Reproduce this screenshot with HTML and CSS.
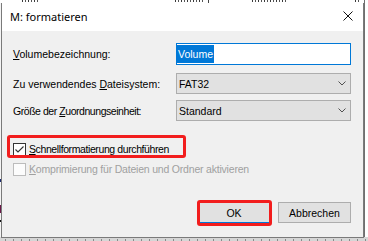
FILE: index.html
```html
<!DOCTYPE html>
<html lang="de">
<head>
<meta charset="utf-8">
<title>M: formatieren</title>
<link rel="stylesheet" href="styles.css">
</head>
<body>
<div class="desktop">
  <div class="behind-top">
    <span class="frag f1"></span>
    <span class="frag f2"></span>
    <span class="frag f2b"></span>
    <span class="frag f3"></span>
    <span class="frag f4"></span>
  </div>
  <div class="behind-right"></div>
  <div class="behind-bottom"></div>
  <div class="left-mark m1"></div>
  <div class="left-mark m2"></div>
  <div class="left-mark m3"></div>

  <div class="dialog">
    <div class="titlebar">
      <span class="title">M: formatieren</span>
      <svg class="close" width="10" height="10" viewBox="0 0 10 10" aria-hidden="true">
        <path d="M0.5 0.5 L9.5 9.5 M9.5 0.5 L0.5 9.5" />
      </svg>
    </div>
    <div class="content">
      <div class="row row-first">
        <span class="lbl"><u>V</u>olumebezeichnung:</span>
        <div class="textbox"><span class="sel">Volume</span></div>
      </div>
      <div class="row row-second">
        <span class="lbl">Zu verwendendes <u>D</u>ateisystem:</span>
        <div class="combo"><span class="combo-text">FAT32</span>
          <svg class="chev" width="8" height="5" viewBox="0 0 8 5" aria-hidden="true"><path d="M0.5 0.5 L4 4 L7.5 0.5"/></svg>
        </div>
      </div>
      <div class="row row-third">
        <span class="lbl lbl-tight">Größe der <u>Z</u>uordnungseinheit:</span>
        <div class="combo"><span class="combo-text">Standard</span>
          <svg class="chev" width="8" height="5" viewBox="0 0 8 5" aria-hidden="true"><path d="M0.5 0.5 L4 4 L7.5 0.5"/></svg>
        </div>
      </div>

      <div class="check-row check-first marked">
        <span class="box">
          <svg width="11" height="11" viewBox="0 0 11 11" aria-hidden="true"><path d="M1.5 5.5 L4 8 L9.5 2.5"/></svg>
        </span>
        <span class="check-label tight-a"><u>S</u>chnellformatierung durchführen</span>
      </div>
      <div class="check-row disabled">
        <span class="box"></span>
        <span class="check-label tight-b"><u>K</u>omprimierung für Dateien und Ordner aktivieren</span>
      </div>

      <div class="buttons">
        <button class="btn btn-default marked-btn">OK</button>
        <button class="btn">Abbrechen</button>
      </div>
    </div>
  </div>
</div>
</body>
</html>
```

FILE: styles.css
```css
html, body {
  margin: 0;
  padding: 0;
}

body {
  width: 368px;
  height: 241px;
  overflow: hidden;
  background: #ffffff;
}

.desktop {
  position: relative;
  width: 368px;
  height: 241px;
  overflow: hidden;
  background: #f4f4f4;
  font-family: "Liberation Sans", Arial, sans-serif;
}

/* window behind the dialog (only its edges are visible) */
.behind-top {
  position: absolute;
  left: 0;
  top: 0;
  width: 368px;
  height: 3px;
  background: #ffffff;
}

.frag {
  position: absolute;
  top: 0;
  height: 2px;
  background: repeating-linear-gradient(90deg, #3a3a3a 0 1px, transparent 1px 3px, #555 3px 4px, transparent 4px 6px);
}

.f1 { left: 22px; width: 16px; }
.f2 { left: 175px; width: 30px; }
.f2b { left: 208px; width: 1px; height: 3px; background: #444; }
.f3 { left: 252px; width: 36px; }
.f4 { left: 355px; width: 5px; }

.behind-right {
  position: absolute;
  left: 364px;
  top: 0;
  width: 4px;
  height: 241px;
  background: #ffffff;
  border-left: 1px solid #6f6f6f;
  box-sizing: border-box;
}

.behind-bottom {
  position: absolute;
  left: 0;
  top: 237px;
  width: 368px;
  height: 4px;
  background:
    repeating-linear-gradient(90deg, transparent 0 5px, #8a8a8a 5px 6px, transparent 6px 8px) 0 2px / 100% 2px no-repeat,
    #d6d6d6;
}

.left-mark {
  position: absolute;
  left: 0;
  width: 1px;
}

.m1 { top: 179px; height: 3px; background: #1c2a6e; }
.m2 { top: 205px; height: 8px; background: #6b1848; }
.m3 { top: 220px; height: 2px; background: #111; }

/* dialog window */
.dialog {
  position: absolute;
  left: 1px;
  top: 3px;
  width: 363px;
  height: 235px;
  box-sizing: border-box;
  border: 1px solid #7a7a7a;
  border-top: none;
  display: flex;
  flex-direction: column;
  background: #f0f0f0;
}

.titlebar {
  height: 28px;
  flex: none;
  background: #ffffff;
  display: flex;
  align-items: center;
  justify-content: space-between;
  padding: 0 10px 0 8px;
}

.title {
  font-family: "Noto Sans", "Liberation Sans", sans-serif;
  font-size: 11px;
  color: #000;
  line-height: 28px;
}

.close {
  align-self: flex-start;
  margin-top: 8px;
  display: block;
}

.close path {
  stroke: #111;
  stroke-width: 1;
  fill: none;
}

.content {
  flex: 1;
  display: flex;
  flex-direction: column;
  padding: 0 12px 0 11px;
  font-size: 10.5px;
  color: #000;
}

.row {
  display: flex;
  align-items: center;
}

.row-first { margin-top: 12px; height: 22px; }
.row-second { margin-top: 8px; height: 21px; }
.row-third { margin-top: 6px; height: 21px; }

.lbl {
  width: 163px;
  flex: none;
  white-space: nowrap;
}

.lbl-tight { letter-spacing: -0.45px; }

.textbox {
  width: 175px;
  height: 22px;
  box-sizing: border-box;
  border: 1px solid #0078d7;
  background: #ffffff;
  display: flex;
  align-items: center;
  padding: 1px 0;
}

.sel {
  background: #0078d7;
  color: #ffffff;
  height: 18px;
  line-height: 18px;
  padding: 0 1px 0 1px;
}

.combo {
  width: 175px;
  height: 21px;
  box-sizing: border-box;
  border: 1px solid #adadad;
  background: #e1e1e1;
  display: flex;
  align-items: center;
  justify-content: space-between;
  padding: 0 4px 0 2px;
}

.chev {
  display: block;
  margin-top: -1px;
}

.chev path {
  stroke: #505050;
  stroke-width: 1;
  fill: none;
}

.check-row {
  position: relative;
  display: flex;
  align-items: center;
  height: 20px;
}

.check-first { margin-top: 18px; }

.box {
  width: 13px;
  height: 13px;
  box-sizing: border-box;
  border: 1px solid #333333;
  background: #ffffff;
  flex: none;
  display: flex;
  align-items: center;
  justify-content: center;
}

.box svg { display: block; }

.box path {
  stroke: #333333;
  stroke-width: 1.1;
  fill: none;
}

.check-label {
  margin-left: 3px;
  white-space: nowrap;
}

.tight-a { letter-spacing: -0.4px; }
.tight-b { letter-spacing: -0.2px; }

.disabled .box {
  border-color: #bcbcbc;
  background: #fcfcfc;
}

.disabled .check-label { color: #a0a0a0; }

.marked::after {
  content: "";
  position: absolute;
  left: -6px;
  top: -4px;
  width: 179px;
  height: 23px;
  box-sizing: border-box;
  border: 3px solid #f21d1d;
  border-radius: 3px;
}

.buttons {
  margin-top: 23px;
  display: flex;
  justify-content: flex-end;
  gap: 8px;
}

.btn {
  height: 21px;
  width: 73px;
  box-sizing: border-box;
  border: 1px solid #adadad;
  background: #e1e1e1;
  font-family: "Liberation Sans", Arial, sans-serif;
  font-size: 10.5px;
  color: #000;
  padding: 0;
  margin: 0;
}

.btn-default {
  position: relative;
  width: 72px;
  border-color: #0078d7;
}

.marked-btn::after {
  content: "";
  position: absolute;
  left: -2px;
  top: -3px;
  width: 75px;
  height: 26px;
  box-sizing: border-box;
  border: 3px solid #f21d1d;
  border-radius: 3px;
}
```
